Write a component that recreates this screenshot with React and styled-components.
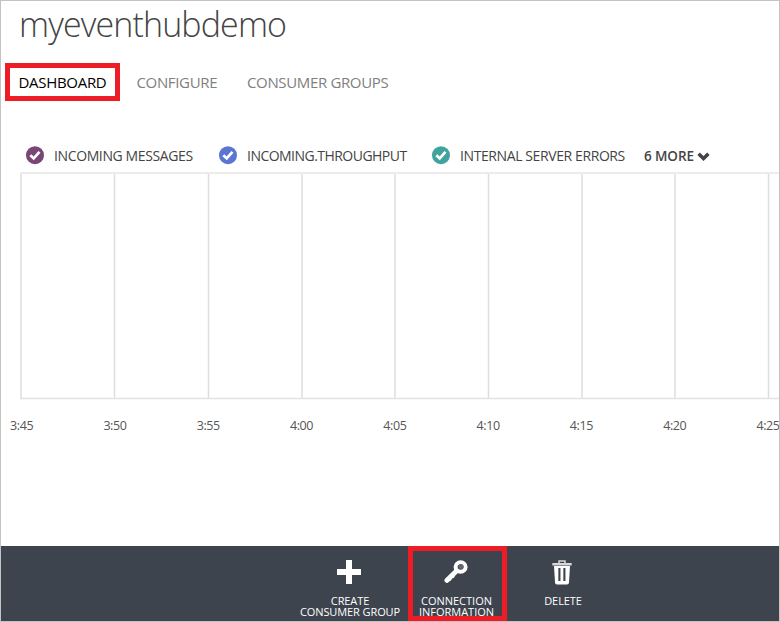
import React from "react";
import styled, { createGlobalStyle } from "styled-components";

const GlobalStyle = createGlobalStyle`
  *, *::before, *::after { box-sizing: border-box; }
  body { margin: 0; background: #fff; font-family: "Open Sans", "Noto Sans", sans-serif; }
  button { font: inherit; color: inherit; background: none; border: 0; padding: 0; }
`;

const Frame = styled.main`
  width: 780px;
  height: 622px;
  border: 1px solid #c3c3c3;
  display: flex;
  flex-direction: column;
  overflow: hidden;
  background: #fff;
`;

const Title = styled.h1`
  margin: 0 0 0 18px;
  height: 62px;
  flex: none;
  font-size: 34px;
  line-height: 46px;
  font-weight: 300;
  letter-spacing: -0.87px;
  color: #444;
`;

const Tabs = styled.nav`
  display: flex;
  height: 38px;
  flex: none;
  padding-left: 4px;
`;

const Tab = styled.button`
  width: ${(p) => p.$width}px;
  height: 38px;
  border: 5px solid ${(p) => (p.$active ? "#ee1c25" : "transparent")};
  padding-left: ${(p) => p.$indent}px;
  text-align: left;
  font-size: 15px;
  line-height: 28px;
  white-space: nowrap;
  letter-spacing: ${(p) => p.$tracking}px;
  color: ${(p) => (p.$active ? "#000" : "#808080")};
`;

const Legend = styled.div`
  display: flex;
  align-items: center;
  height: 20px;
  flex: none;
  margin: 44px 0 0 25px;
  font-size: 14px;
  color: #444;
`;

const Metric = styled.div`
  display: flex;
  align-items: center;
  flex: none;
  gap: 9px;
  width: ${(p) => p.$width}px;
  white-space: nowrap;
  letter-spacing: ${(p) => p.$tracking}px;
  svg { flex: none; }
`;

const MetricName = styled.span`
  line-height: 20px;
  position: relative;
  top: 1px;
`;

const More = styled.button`
  display: flex;
  align-items: center;
  gap: 3px;
  font-weight: 600;
  font-size: 13.5px;
  line-height: 20px;
  letter-spacing: ${(p) => p.$tracking}px;
  white-space: nowrap;
  svg { position: relative; top: 1px; }
`;

const Chart = styled.svg`
  display: block;
  flex: none;
  margin: 7px 0 0 19px;
`;

const Axis = styled.div`
  display: grid;
  grid-template-columns: repeat(9, 93.3px);
  flex: none;
  width: 840px;
  margin: 16px 0 0 -26px;
  text-align: center;
  font-size: 12.5px;
  line-height: 20px;
  letter-spacing: -0.4px;
  color: #555;
`;

const CommandBar = styled.footer`
  display: flex;
  justify-content: flex-start;
  flex: none;
  height: 75px;
  margin-top: auto;
  padding-left: 291px;
  background: #3e444e;
  color: #fff;
`;

const Command = styled.button`
  display: flex;
  flex-direction: column;
  align-items: center;
  width: ${(p) => p.$width}px;
  height: 75px;
  border: 5px solid ${(p) => (p.$marked ? "#ee1c25" : "transparent")};
  padding-right: ${(p) => (p.$marked ? 2 : 0)}px;
  overflow: hidden;
`;

const CommandIcon = styled.span`
  display: flex;
  align-items: center;
  justify-content: center;
  height: 44px;
  flex: none;
  padding: 0 2px 2px 0;
`;

const CommandLabel = styled.span`
  display: block;
  text-align: center;
  font-size: 11px;
  line-height: 11px;
  letter-spacing: ${(p) => p.$tracking}px;
  white-space: pre;
`;

const CheckDot = ({ color }) => (
  <svg width="19" height="19" viewBox="0 0 19 19">
    <circle cx="9" cy="9.2" r="9" fill={color} />
    <path d="M4.3 9.2 7.7 12.3 13.5 5.8" fill="none" stroke="#fff" strokeWidth="2.7" />
  </svg>
);

const Chevron = () => (
  <svg width="13" height="11" viewBox="0 0 13 11">
    <path d="M1.6 2.8 6.5 7.5 11.4 2.8" fill="none" stroke="#444" strokeWidth="3.5" />
  </svg>
);

const PlusIcon = () => (
  <svg width="26" height="26" viewBox="0 0 26 26">
    <path d="M10 1h6v9h9v6h-9v9h-6v-9H1v-6h9z" fill="#fff" />
  </svg>
);

const KeyIcon = () => (
  <svg width="24" height="26" viewBox="0 0 24 26">
    <path d="M12.5 12 3 21.3" fill="none" stroke="#fff" strokeWidth="5" strokeLinecap="round" />
    <path d="M5 19.5 6.8 21.3M8 16.5 10 18.5" fill="none" stroke="#fff" strokeWidth="2.4" />
    <ellipse cx="16.6" cy="8" rx="5" ry="4.7" fill="none" stroke="#fff" strokeWidth="4" />
    <circle cx="17" cy="7.6" r="2.5" fill="#626771" />
    <path d="m10.5 10 3.5 4 1.5-2-3-4z" fill="#fff" />
  </svg>
);

const TrashIcon = () => (
  <svg width="20" height="25" viewBox="0 0 20 25">
    <path d="M7 3V1h6v2" fill="none" stroke="#d5d7da" strokeWidth="1.5" />
    <path d="M.3 3h19.4v2.5H.3z" fill="#d5d7da" />
    <path d="M2 6h16l-1 16.5q-.2 2-2 2H5q-1.800 0-2-2z" fill="#fff" />
    <path d="M7.4 8v13M12.4 8v13" stroke="#3e444e" strokeWidth="2.1" />
  </svg>
);

const gridLines = [1, 94.5, 188.5, 282, 375, 468.5, 562, 655, 748.5];
const times = ["3:45", "3:50", "3:55", "4:00", "4:05", "4:10", "4:15", "4:20", "4:25"];

export default function App() {
  return (
    <>
      <GlobalStyle />
      <Frame>
        <Title>myeventhubdemo</Title>
        <Tabs>
          <Tab $active $width={115} $indent={8.5} $tracking={-0.3}>DASHBOARD</Tab>
          <Tab $width={110} $indent={11.5} $tracking={-0.35}>CONFIGURE</Tab>
          <Tab $width={180} $indent={12} $tracking={-0.35}>CONSUMER GROUPS</Tab>
        </Tabs>
        <Legend>
          <Metric $width={193} $tracking={-0.38}>
            <CheckDot color="#7a4675" />
            <MetricName>INCOMING MESSAGES</MetricName>
          </Metric>
          <Metric $width={213} $tracking={-0.53}>
            <CheckDot color="#5a75d2" />
            <MetricName>INCOMING.THROUGHPUT</MetricName>
          </Metric>
          <Metric $width={212} $tracking={-0.4}>
            <CheckDot color="#42a39d" />
            <MetricName>INTERNAL SERVER ERRORS</MetricName>
          </Metric>
          <More $tracking={-0.1}>
            <MetricName>6 MORE</MetricName>
            <Chevron />
          </More>
        </Legend>
        <Chart width="759" height="228" viewBox="0 0 759 228">
          {gridLines.map((x) => (
            <path key={x} d={`M${x} 1V227`} stroke="#dedede" strokeWidth="1.5" />
          ))}
          <path d="M0 1H759" stroke="#ececec" strokeWidth="2" />
          <path d="M0 226.5H759" stroke="#e2e2e2" strokeWidth="1.5" />
        </Chart>
        <Axis>
          {times.map((time) => <span key={time}>{time}</span>)}
        </Axis>
        <CommandBar>
          <Command $width={116}>
            <CommandIcon><PlusIcon /></CommandIcon>
            <CommandLabel $tracking={-0.1}>{"CREATE\nCONSUMER GROUP"}</CommandLabel>
          </Command>
          <Command $marked $width={99}>
            <CommandIcon><KeyIcon /></CommandIcon>
            <CommandLabel $tracking={0}>{"CONNECTION\nINFORMATION"}</CommandLabel>
          </Command>
          <Command $width={112}>
            <CommandIcon><TrashIcon /></CommandIcon>
            <CommandLabel $tracking={-0.1}>DELETE</CommandLabel>
          </Command>
        </CommandBar>
      </Frame>
    </>
  );
}
